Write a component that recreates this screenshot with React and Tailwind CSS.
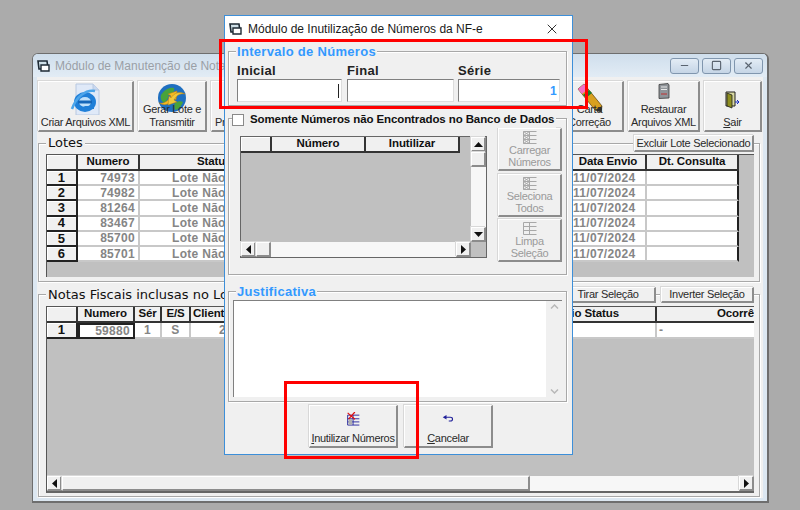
import React from 'react';
import { X, Minus, Square } from 'lucide-react';

const uiBase = "font-['Liberation_Sans',sans-serif] text-[11px] tracking-[-0.3px] whitespace-nowrap";
const ui = `${uiBase} text-[#2a2a2a]`;
const bold = "font-['Liberation_Sans',sans-serif] font-bold text-[11.5px] tracking-[-0.1px]";
const cellFont = "font-['Liberation_Sans',sans-serif] font-bold text-[12px] tracking-[0.3px]";
const labelFont = "font-['Liberation_Sans',sans-serif] font-bold text-[13px] tracking-[0.3px]";
const raised = 'bg-[#f0f0f0] border-t border-l border-white border-r-2 border-b-2 border-r-[#8c8c8c] border-b-[#8c8c8c] shadow-[-1px_-1px_0_#d8d8d8]';
const groupBox = 'relative border border-[#a8a8a8] shadow-[inset_1px_1px_0_#fff,1px_1px_0_#fff]';
const track = 'bg-[#f7f7f7]';

const IeIcon = () => (
  <svg width="32" height="32" viewBox="0 0 32 32">
    <path d="M6 1h17l6 6v25H6z" fill="#dfe9f8" stroke="#b8c8e0" />
    <path d="M23 1v6h6" fill="#c8d8f0" stroke="#b8c8e0" />
    <ellipse cx="15" cy="19" rx="11" ry="10" fill="#1f7fd8" />
    <ellipse cx="15" cy="19" rx="6" ry="5" fill="#bfe0fa" />
    <rect x="8" y="17.5" width="14" height="3" fill="#1566b8" />
    <path d="M15 23h9v3H10z" fill="#1f7fd8" />
    <path d="M2 26C6 14 16 6 25 8" fill="none" stroke="#4ca5ea" strokeWidth="2.5" />
  </svg>
);

const GlobeIcon = () => (
  <svg width="32" height="31" viewBox="0 0 32 31">
    <circle cx="16" cy="15" r="14" fill="#1f6fc0" />
    <path d="M5 12c4-6 9-8 13-7 1 4-2 5-5 6-1 5-3 8-5 9-3-2-4-5-3-8zM19 20c3-2 6-2 8-1-2 5-5 8-8 8-1-3-1-5 0-7z" fill="#49a33b" />
    <path d="M3 20c5 1 9-2 12-7l-3-2 9-3-1 9-2-2c-3 5-8 9-15 5z" fill="#f5b921" stroke="#b57d10" strokeWidth=".5" />
    <path d="M29 11c-5-1-8 1-11 6l3 2-9 3 1-9 2 2c3-5 8-7 14-4z" fill="#f0c83c" stroke="#b57d10" strokeWidth=".5" />
  </svg>
);

const PencilIcon = () => (
  <svg width="28" height="30" viewBox="0 0 28 30">
    <path d="M2 6l6-5 18 22-1 6-6-2z" fill="#d8a020" stroke="#5a4008" strokeWidth=".7" />
    <path d="M2 6l6-5 4 5-6 5z" fill="#f070c8" />
    <path d="M7 12l6-5 3 3-6 5z" fill="#1f7a30" />
    <path d="M19 27l6 2 1-6z" fill="#333" />
  </svg>
);

const ServerIcon = () => (
  <svg width="14" height="16" viewBox="0 0 14 16">
    <path d="M2 1.5 11 0.5 12 2v13l-10 .5z" fill="#8f9499" stroke="#3a3a3a" strokeWidth=".8" />
    <path d="M4 4h6M4 6.5h6" stroke="#e8e8e8" />
    <path d="M4 11h6" stroke="#c03030" />
  </svg>
);

const DoorIcon = () => (
  <svg width="16" height="18" viewBox="0 0 16 18">
    <path d="M1 1h9v14H1z" fill="#d8d8a0" stroke="#222" />
    <path d="M2 2l5 2v13l-5-2z" fill="#8f8f20" stroke="#222" strokeWidth=".8" />
    <path d="M10 11l4 0m-2-2 2 2-2 2" stroke="#1a2fc0" fill="none" />
  </svg>
);

const WindowIcon = () => (
  <svg width="15" height="14" viewBox="0 0 15 14">
    <path d="M1 2h9l1 8H2z" fill="#cfe0e8" stroke="#1e2a34" strokeWidth="1.6" />
    <path d="M4 6h8v6H4z" fill="#fff" stroke="#1e2a34" strokeWidth="1.4" />
  </svg>
);

const GridIcon = ({ crossed, color = '#a8a8a8' }) => (
  <svg width="14" height="13" viewBox="0 0 14 13" fill="none" stroke={color}>
    <path d="M.5.5h13M.5 4.5h13M.5 8.5h13M.5 12.5h13M.5.5v12M6.5.5v12" />
    {crossed && <path d="M.5.5l6 4m0-4l-6 4M.5 4.5l6 4m0-4l-6 4M.5 8.5l6 4m0-4l-6 4" />}
  </svg>
);

const InutilizarIcon = () => (
  <svg width="15" height="15" viewBox="0 0 15 15" fill="none">
    <path d="M1 3.5h13M1 7.5h13M1 11h13M1 14.5h13M1 3.5v11M7 3.5v11" stroke="#20209a" />
    <path d="M2 8h4v6H2z" fill="#b0b0b0" />
    <path d="M1 1l8 7M9 0L2 8" stroke="#e01010" strokeWidth="1.4" />
  </svg>
);

const UndoIcon = () => (
  <svg width="14" height="10" viewBox="0 0 14 10" fill="none">
    <path d="M4 3h6c4 0 4 5 0 5H8" stroke="#20209a" strokeWidth="1.5" />
    <path d="M0 3l5-3v6z" fill="#20209a" />
  </svg>
);

const Arrow = ({ dir }) => {
  const shapes = {
    up: 'M0 5 4.5 0 9 5z',
    down: 'M0 0h9L4.5 5z',
    left: 'M5 0v9L0 4.5z',
    right: 'M0 0l5 4.5L0 9z',
  };
  const tall = dir === 'left' || dir === 'right';
  return (
    <svg width={tall ? 5 : 9} height={tall ? 9 : 5} viewBox={tall ? '0 0 5 9' : '0 0 9 5'}>
      <path d={shapes[dir]} fill="#111" />
    </svg>
  );
};

const ScrollBtn = ({ dir, className = '' }) => (
  <div className={`${raised} flex items-center justify-center shrink-0 ${className}`}>
    <Arrow dir={dir} />
  </div>
);

function ToolButton({ icon, label, className = '' }) {
  return (
    <div className={`${raised} ${ui} h-[51px] flex flex-col items-center justify-end pb-[1px] leading-[13px] text-center shrink-0 overflow-hidden relative ${className}`}>
      <div className="absolute top-[1px] left-0 right-0 flex justify-center">{icon}</div>
      <div className="relative">{label}</div>
    </div>
  );
}

function HeadCell({ children, className = '' }) {
  return (
    <div className={`${bold} text-[#111] h-full bg-[#f0f0f0] border-r-2 border-r-[#333] border-b-2 border-b-[#333] flex items-center justify-center whitespace-nowrap overflow-hidden ${className}`}>
      {children}
    </div>
  );
}

function Cell({ children, className = '' }) {
  return (
    <div className={`${cellFont} text-[#858585] bg-white border-r-2 border-r-[#c8c8c8] border-b-2 border-b-[#c8c8c8] flex items-center whitespace-nowrap overflow-hidden h-full ${className}`}>
      {children}
    </div>
  );
}

const RowHead = ({ children }) => (
  <div className={`${labelFont} text-[#111] h-full bg-[#f0f0f0] shadow-[inset_1px_1px_0_#fff] border-r-2 border-r-[#222] border-b-2 border-b-[#222] flex items-center justify-center`}>
    {children}
  </div>
);

const lotes = ['74973', '74982', '81264', '83467', '85700', '85701'];

function LotesGrid() {
  return (
    <div className="mt-[10px] ml-[7px] w-[708px] h-[123px] bg-[#c0c0c0] border-t border-l border-[#555] overflow-hidden">
      <div className="grid grid-cols-[31px_62px_431px_76px_92px] grid-rows-[16px] auto-rows-[15.2px] w-fit">
        <div className="h-full bg-[#f0f0f0] shadow-[inset_1px_1px_0_#fff] border-r-2 border-b-2 border-[#333]" />
        <HeadCell>Numero</HeadCell>
        <HeadCell className="justify-start pl-[57px]">Status</HeadCell>
        <HeadCell>Data Envio</HeadCell>
        <HeadCell>Dt. Consulta</HeadCell>
        {lotes.map((n, i) => (
          <React.Fragment key={n}>
            <RowHead>{i + 1}</RowHead>
            <Cell className="justify-end pr-[3px]">{n}</Cell>
            <Cell className="pl-[32px]">Lote Não Enviado</Cell>
            <Cell className="pl-[2px]">11/07/2024</Cell>
            <Cell className="!border-r-[#222]" />
          </React.Fragment>
        ))}
      </div>
    </div>
  );
}

function NotasGrid() {
  return (
    <div className="mt-[11px] ml-[7px] w-[708px] h-[187px] bg-[#c0c0c0] border-t border-l border-[#555] border-b-2 border-b-[#666] flex flex-col overflow-hidden">
      <div className="grid grid-cols-[31px_57px_27px_29px_50px_416px_97px] grid-rows-[16px] auto-rows-[15.5px] w-fit">
        <div className="h-full bg-[#f0f0f0] shadow-[inset_1px_1px_0_#fff] border-r-2 border-b-2 border-[#333]" />
        <HeadCell>Numero</HeadCell>
        <HeadCell>Sér</HeadCell>
        <HeadCell>E/S</HeadCell>
        <HeadCell className="justify-start pl-[2px]">Cliente</HeadCell>
        <HeadCell className="justify-end pr-[36px]">Envio Status</HeadCell>
        <HeadCell className="justify-end !border-r-0">Ocorrê</HeadCell>
        <RowHead>1</RowHead>
        <Cell className="justify-end pr-[3px] !border-2 !border-[#222]">59880</Cell>
        <Cell className="justify-center">1</Cell>
        <Cell className="justify-center">S</Cell>
        <Cell className="justify-end pr-[6px]">20</Cell>
        <Cell />
        <Cell className="pl-[2px] !border-r-0">-</Cell>
      </div>
      <div className="flex-1" />
      <div className={`flex h-[15px] ${track}`}>
        <ScrollBtn dir="left" className="w-[15px]" />
        <div className={`${raised} w-[468px]`} />
        <div className="flex-1" />
        <ScrollBtn dir="right" className="w-[15px]" />
      </div>
    </div>
  );
}

function MainWindow() {
  return (
    <div className="absolute left-[32px] top-[53px] w-[737px] h-[450px] rounded-t-[6px] border border-[#6e6e6e] border-b-2 border-r-2 bg-[#dce7f1] flex flex-col overflow-hidden">
      <div className="h-[23px] shrink-0 flex items-center pl-[4px] bg-gradient-to-b from-[#cfdeec] to-[#e2ecf5]">
        <WindowIcon />
        <span className="ml-[3px] font-['Liberation_Sans',sans-serif] text-[12px] text-[#9a9fa6] whitespace-nowrap">Módulo de Manutenção de Notas</span>
        <div className="ml-auto flex gap-[3px] mr-[4px]">
          {[Minus, Square, X].map((Ico, i) => (
            <div key={i} className="w-[29px] h-[16px] rounded-[3px] border border-[#8096ae] bg-gradient-to-b from-[#e3ecf5] to-[#c5d5e6] flex items-center justify-center">
              <Ico size={11} strokeWidth={2.5} color="#5a6470" />
            </div>
          ))}
        </div>
      </div>
      <div className="flex-1 mx-[4px] mb-[3px] bg-[#f0f0f0] flex flex-col min-h-0 pl-[1px] pr-[1px]">
        <div className="flex gap-[4px] h-[51px] mt-[4px] shrink-0">
          <ToolButton className="w-[96px]" icon={<IeIcon />} label="Criar Arquivos XML" />
          <ToolButton className="w-[69px]" icon={<GlobeIcon />} label={<>Gerar Lote e<br />Transmitir</>} />
          <ToolButton className="w-[80px] !items-start pl-[3px]" label="Pr" />
          <div className="flex-1" />
          <ToolButton className="w-[68px]" icon={<PencilIcon />} label={<>Carta<br />Correção</>} />
          <ToolButton className="w-[72px]" icon={<ServerIcon />} label={<>Restaurar<br />Arquivos XML</>} />
          <ToolButton className="w-[58px]" icon={<div className="mt-[8px]"><DoorIcon /></div>} label={<><u>S</u>air</>} />
        </div>
        <div className={`${groupBox} mt-[11px] w-[722px] h-[139px] shrink-0`}>
          <div className="absolute left-[7px] -top-[9px] bg-[#f0f0f0] px-[2px] font-['DejaVu_Sans',sans-serif] text-[13px] leading-[15px] text-[#111]">Lotes</div>
          <div className={`${raised} ${ui} absolute right-[5px] -top-[9px] w-[120px] h-[17px] flex items-center justify-center`}>Excluir Lote Selecionado</div>
          <LotesGrid />
        </div>
        <div className={`${groupBox} mt-[12px] w-[722px] h-[203px] shrink-0`}>
          <div className="absolute left-[7px] -top-[8px] bg-[#f0f0f0] px-[2px] font-['DejaVu_Sans',sans-serif] text-[13px] leading-[15px] text-[#111] whitespace-nowrap">Notas Fiscais inclusas no Lote</div>
          <div className={`${raised} ${ui} absolute left-[522px] -top-[8px] w-[95px] h-[16px] flex items-center justify-center`}>Tirar Seleção</div>
          <div className={`${raised} ${ui} absolute right-[5px] -top-[8px] w-[93px] h-[16px] flex items-center justify-center`}>Inverter Seleção</div>
          <NotasGrid />
        </div>
      </div>
    </div>
  );
}

const GroupTitle = ({ children }) => (
  <div className={`absolute left-[7px] -top-[8px] bg-[#f0f0f0] px-[1px] leading-[15px] ${labelFont} text-[#3399ff]`}>{children}</div>
);

function NumberField({ label, className = '', value }) {
  return (
    <div className={`flex flex-col ${className}`}>
      <div className={`${labelFont} leading-[15px] text-[#222]`}>{label}</div>
      <div className={`h-[23px] bg-white border-t border-l border-[#808080] border-r border-b border-r-[#ddd] border-b-[#ddd] mt-[1px] flex items-center justify-end pr-[2px] ${cellFont} text-[#3399ff]`}>
        {value}
      </div>
    </div>
  );
}

function SideButton({ crossed, label }) {
  return (
    <div className={`${raised} ${uiBase} text-[#9a9a9a] w-[64px] h-[43px] flex flex-col items-center leading-[12px] text-center pt-[2px]`}>
      <GridIcon crossed={crossed} />
      <div>{label}</div>
    </div>
  );
}

function Dialog() {
  return (
    <div className="absolute left-[224px] top-[15px] w-[349px] h-[440px] bg-[#f0f0f0] border border-[#3d8fd9] flex flex-col">
      <div className="h-[26px] bg-white flex items-center pl-[4px] shrink-0">
        <WindowIcon />
        <span className="ml-[4px] font-['Liberation_Sans',sans-serif] text-[12px] text-[#1a1a1a] whitespace-nowrap">Módulo de Inutilização de Números da NF-e</span>
        <X size={16} strokeWidth={1.4} color="#222" className="ml-auto mr-[12px]" />
      </div>

      <div className={`${groupBox} mx-[3px] mt-[9px] w-[339px] h-[55px] shrink-0 flex pl-[8px] pt-[11px] gap-[5px]`}>
        <GroupTitle>Intervalo de Números</GroupTitle>
        <NumberField label="Inicial" className="w-[105px]" value={<span className="w-px h-[14px] bg-[#222]" />} />
        <NumberField label="Final" className="w-[107px]" />
        <NumberField label="Série" className="w-[102px] ml-[-1px]" value="1" />
      </div>

      <div className={`${groupBox} mx-[3px] mt-[12px] w-[339px] h-[157px] shrink-0 pl-[11px] pt-[17px] flex gap-[11px]`}>
        <div className={`absolute left-[3px] -top-[8px] bg-[#f0f0f0] flex items-center gap-[6px] pr-[2px] ${bold} text-[#111] whitespace-nowrap`}>
          <div className="w-[12px] h-[12px] bg-white border border-[#8a8a8a]" />
          Somente Números não Encontrados no Banco de Dados
        </div>
        <div className="w-[247px] h-[122px] bg-[#c0c0c0] border border-[#666] flex flex-col shrink-0">
          <div className="flex flex-1 min-h-0">
            <div className="flex-1 flex flex-col">
              <div className="grid grid-cols-[31px_94px_94px] h-[16px]">
                <div className="bg-[#f0f0f0] shadow-[inset_1px_1px_0_#fff] border-r-2 border-b-2 border-[#333]" />
                <HeadCell>Número</HeadCell>
                <HeadCell>Inutilizar</HeadCell>
              </div>
            </div>
            <div className={`w-[15px] flex flex-col ${track}`}>
              <ScrollBtn dir="up" className="h-[15px]" />
              <div className={`${raised} h-[15px]`} />
              <div className="flex-1" />
              <ScrollBtn dir="down" className="h-[15px]" />
            </div>
          </div>
          <div className={`flex h-[15px] ${track}`}>
            <ScrollBtn dir="left" className="w-[15px]" />
            <div className={`${raised} w-[15px]`} />
            <div className="flex-1" />
            <ScrollBtn dir="right" className="w-[15px]" />
            <div className="w-[15px] bg-[#c0c0c0]" />
          </div>
        </div>
        <div className="flex flex-col gap-[2.5px] -mt-[8px]">
          <SideButton crossed label={<>Carregar<br />Números</>} />
          <SideButton crossed label={<>Seleciona<br />Todos</>} />
          <SideButton label={<>Limpa<br />Seleção</>} />
        </div>
      </div>

      <div className={`${groupBox} mx-[3px] mt-[16px] w-[339px] h-[111px] shrink-0 p-[4px] pt-[8px]`}>
        <GroupTitle>Justificativa</GroupTitle>
        <div className="h-full bg-white border-t border-l border-[#808080] flex justify-end">
          <div className="w-[16px] bg-[#f0f0f0] flex flex-col justify-between items-center py-[3px]">
            <svg width="9" height="5" viewBox="0 0 9 5" fill="none" stroke="#b8b8b8" strokeWidth="1.5"><path d="M1 4.5l3.5-3.5 3.5 3.5" /></svg>
            <svg width="9" height="5" viewBox="0 0 9 5" fill="none" stroke="#b8b8b8" strokeWidth="1.5"><path d="M1 .5l3.5 3.5 3.5-3.5" /></svg>
          </div>
        </div>
      </div>

      <div className="flex ml-[84px] mt-[3px] gap-[6px]">
        <div className={`${raised} ${ui} w-[89px] h-[43px] flex flex-col items-center pt-[6px]`}>
          <InutilizarIcon />
          <div className="mt-[4px]"><u>I</u>nutilizar Números</div>
        </div>
        <div className={`${raised} ${ui} w-[89px] h-[43px] flex flex-col items-center pt-[9px]`}>
          <UndoIcon />
          <div className="mt-[7px]"><u>C</u>ancelar</div>
        </div>
      </div>
    </div>
  );
}

export default function App() {
  return (
    <div className="relative w-[800px] h-[510px] bg-[#ababab] overflow-hidden">
      <MainWindow />
      <Dialog />
      {/* destaques vermelhos */}
      <div className="absolute left-[219px] top-[39px] w-[369px] h-[70px] border-[3px] border-[#ff0000]" />
      <div className="absolute left-[284px] top-[381px] w-[135px] h-[78px] border-[3px] border-[#ff0000]" />
    </div>
  );
}
